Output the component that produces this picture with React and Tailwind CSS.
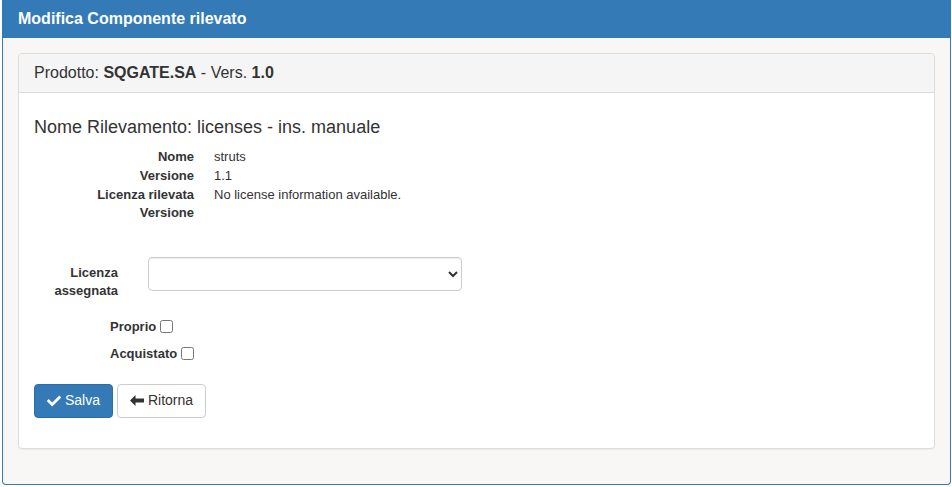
import { FaCheck } from 'react-icons/fa';

const details = [
    { label: 'Nome', value: 'struts' },
    { label: 'Versione', value: '1.1' },
    { label: 'Licenza rilevata', value: 'No license information available.' },
    { label: 'Versione', value: '' },
];

function ArrowLeft() {
    return (
        <svg width="14" height="11" viewBox="0 0 14 11" fill="currentColor">
            <path d="M0 5.5 L5.5 0 V3.5 H14 V7.5 H5.5 V11 Z" />
        </svg>
    );
}

export default function App() {
    return (
        <div className="min-h-[487px] bg-white text-[#333] font-['Liberation_Sans',Arial,sans-serif] text-[13px] leading-[1.42857]">
            <div className="ml-[2px] w-[949px] rounded-b border-x border-b border-[#337ab7] bg-[#f8f7f5]">
                <div className="flex h-[38px] items-center bg-[#337ab7] px-[15px] text-[16px] font-bold text-white">
                    Modifica Componente rilevato
                </div>

                <div className="p-[15px]">
                    <section className="mb-[20px] rounded border border-[#ddd] bg-white shadow-[0_1px_1px_rgba(0,0,0,0.05)]">
                        <div className="rounded-t border-b border-[#ddd] bg-[#f5f5f5] px-[15px] py-[10px] text-[16px] leading-[1.1]">
                            Prodotto: <b>SQGATE.SA</b> - Vers. <b>1.0</b>
                        </div>

                        <div className="p-[15px]">
                            <h4 className="mt-[10px] mb-[11px] text-[18px] leading-[1.1]">
                                Nome Rilevamento: licenses - ins. manuale
                            </h4>

                            <dl>
                                {details.map((row, i) => (
                                    <div key={i} className="flex h-[18.57px]">
                                        <dt className="w-[160px] shrink-0 text-right font-bold">{row.label}</dt>
                                        <dd className="ml-[20px]">{row.value}</dd>
                                    </div>
                                ))}
                            </dl>

                            <div className="mt-[34px] flex items-start">
                                <label className="w-[84px] pt-[7px] text-right font-bold">Licenza assegnata</label>
                                <select className="ml-[30px] h-[34px] w-[314px] rounded border border-[#ccc] bg-white px-[12px] text-[14px] shadow-[inset_0_1px_1px_rgba(0,0,0,0.075)]">
                                    <option></option>
                                </select>
                            </div>

                            <div className="mt-[17px] flex flex-col gap-[9px] pl-[76px]">
                                <label className="flex h-[18.57px] items-center font-bold">
                                    Proprio
                                    <input type="checkbox" className="ml-[4px] mb-[2px] h-[13px] w-[13px]" />
                                </label>
                                <label className="flex h-[18.57px] items-center font-bold">
                                    Acquistato
                                    <input type="checkbox" className="ml-[4px] mb-[2px] h-[13px] w-[13px]" />
                                </label>
                            </div>

                            <div className="mt-[20px] mb-[15px] flex gap-[4px]">
                                <button
                                    type="button"
                                    className="flex h-[34px] w-[79px] items-center justify-center gap-[4px] rounded border border-[#2e6da4] bg-[#337ab7] text-[14px] text-white"
                                >
                                    <FaCheck className="h-[14px] w-[14px]" />
                                    Salva
                                </button>
                                <button
                                    type="button"
                                    className="flex h-[34px] w-[89px] items-center justify-center gap-[4px] rounded border border-[#ccc] bg-white text-[14px] text-[#333]"
                                >
                                    <ArrowLeft />
                                    Ritorna
                                </button>
                            </div>
                        </div>
                    </section>
                </div>
            </div>
        </div>
    );
}
